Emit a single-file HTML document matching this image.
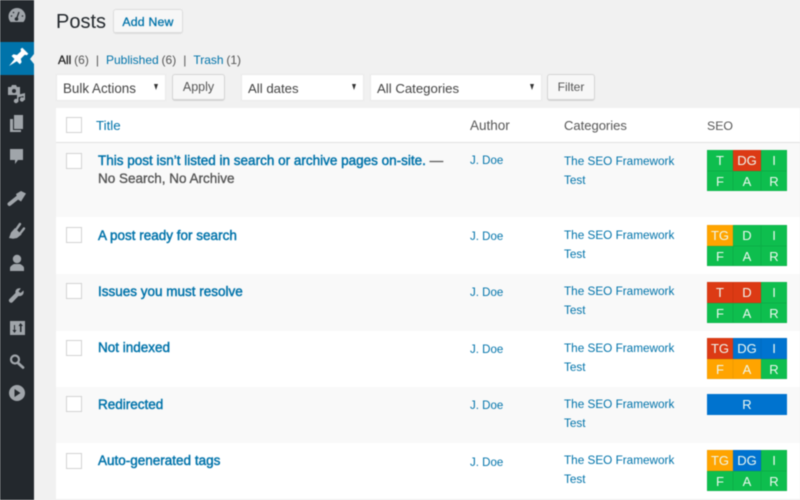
<!DOCTYPE html>
<html><head><meta charset="utf-8"><style>
*{box-sizing:border-box}
html,body{margin:0;padding:0;width:800px;height:500px;overflow:hidden;background:#f1f1f1;font-family:"Liberation Sans",sans-serif;color:#555}
.a{position:absolute;white-space:nowrap}
a,.l{color:#0073aa}
#wrap{position:absolute;left:0;top:0;width:800px;height:500px;overflow:hidden;filter:blur(.45px)}
.sel{background:#fff;border:1px solid #eaeaea;height:27px;font-size:13.2px;line-height:27px;padding-left:6px;color:#444}
.sel:after{content:"";position:absolute;right:7px;top:9px;border-left:2.5px solid transparent;border-right:2.5px solid transparent;border-top:6px solid #333}
.btn{background:#f7f7f7;border:1px solid #d4d4d4;border-bottom-width:2px;border-radius:3px;color:#555;text-align:center}
.row{position:absolute;left:56px;width:744px}
.cb{position:absolute;left:66px;width:16px;height:16px;background:#fff;border:1px solid #d2d2d2}
.t{position:absolute;left:98px;font-size:13.5px;color:#0073aa;white-space:nowrap;line-height:18px;-webkit-text-stroke:.45px #0073aa}
.au{position:absolute;left:470px;font-size:11.5px;color:#0073aa;line-height:16px}
.c{position:absolute;left:564px;font-size:11.75px;color:#0073aa;line-height:19px;white-space:nowrap}
.g{position:absolute;left:707px;width:80px;height:41px;display:grid;grid-template-columns:26px 28px 26px;grid-template-rows:21px 20px;font-size:13px;color:#eef8f0;text-align:center;line-height:21px}
.g div{background:#0ebe4e;box-shadow:inset 0 0 0 .5px #0cae47}
.g .o{background:#ffa400;box-shadow:inset 0 0 0 .5px #f09a00}.g .r{background:#dc3a14;box-shadow:inset 0 0 0 .5px #cc3511}.g .b{background:#0073cf;box-shadow:inset 0 0 0 .5px #006bc0}
svg{position:absolute;left:0;top:0}
</style></head><body><div id="wrap">
<div class="a" style="left:0;top:0;width:34px;height:500px;background:#23282d"></div>
<div class="a" style="left:0;top:42px;width:34px;height:33px;background:#0073aa"></div>
<div class="a" style="left:30px;top:54px;border-style:solid;border-width:5px 4px 5px 0;border-color:transparent #f1f1f1 transparent transparent;width:0;height:0"></div>
<svg width="34" height="500" fill="#a0a5aa">
<path d="M10.500 22A8.500 8.500 0 1 1 23.500 22z"/><path d="M16.500 19l2.500-7" stroke="#23282d" stroke-width="1.300"/><circle cx="16.500" cy="19" r="1.800" fill="#23282d"/><circle cx="11.500" cy="16" r=".8" fill="#23282d"/><circle cx="13.500" cy="12.500" r=".8" fill="#23282d"/><circle cx="22.500" cy="16" r=".8" fill="#23282d"/>
<path fill="#fff" d="M9 66l5.500-7-3-3 2-1.800 3.500.8 4-3.800-.5-2.200 1.800-1.200 6 6-1.500 1.500-2-.5-4 4 .8 3.500-1.800 2-3-3z"/>
<path d="M8 87h3l1-2h4l1 2h3v8H8z"/><circle cx="14" cy="91" r="2" fill="#23282d"/><path d="M17 101v-6l8-2v7h-1.500v-4l-5 1.200V102z"/><circle cx="16" cy="101" r="2.200"/><circle cx="22" cy="99.500" r="2.200"/>
<path d="M14 115h9v14h-9z"/><path d="M10 119h3v11h8v2H10z"/>
<path d="M10 149h13v11h-5l-3 4v-4h-5z"/>
<path d="M16 194l5-3 5 2.500-5 8-3-2z"/><path d="M17 198l-7.500 6" stroke="#a0a5aa" stroke-width="4" stroke-linecap="round"/>
<path d="M9 238l2-5.500 4-4.500 6.500 6.500-4.500 3.500-4 .8z"/><path d="M16.500 229l3.500-5M20.500 233l3.500-4.500" stroke="#a0a5aa" stroke-width="2.400" stroke-linecap="round"/>
<circle cx="17" cy="259" r="4.200"/><path d="M10 271v-3c0-2 3-3.500 4-4h6c1 .5 4 2 4 4v3z"/>
<path d="M23.500 290.500l-3 2.500-2-1.500 2.300-3c-3-1-6 1.200-5.300 4.500l-6 6a2.200 2.200 0 0 0 3 3.200l6-6.200c3.500.7 5.800-2 5-5.500z"/>
<path fill-rule="evenodd" d="M10 321h15v14H10zM14 325v5h-1.500l2 3 2-3H15v-5zM20.500 323l-2 3H20v6h1.500v-6H23z"/>
<circle cx="15" cy="359.500" r="4" fill="none" stroke="#a0a5aa" stroke-width="2.200"/><path d="M18 363l5 4.500" stroke="#a0a5aa" stroke-width="2.800" stroke-linecap="round"/>
<circle cx="17" cy="393" r="8"/><path d="M14.500 389v8l6-4z" fill="#23282d"/>
</svg>

<div class="a" style="left:56px;top:9px;font-size:20px;line-height:27px;color:#23282d">Posts</div>
<div class="a btn" style="left:113px;top:8.500px;width:70px;height:25px;color:#0073aa;font-size:12.300px;line-height:24px;border-color:#ddd;-webkit-text-stroke:.3px #0073aa;letter-spacing:.2px">Add New</div>
<div class="a" style="left:58px;top:52px;font-size:12px;line-height:16px;word-spacing:-.5px"><span style="color:#222;-webkit-text-stroke:.3px #222">All</span> (6)<span style="margin:0 7px">|</span><span class="l">Published</span> (6)<span style="margin:0 7px">|</span><span class="l">Trash</span> (1)</div>

<div class="a sel" style="left:56px;top:74px;width:110px;font-size:13.400px">Bulk Actions</div>
<div class="a btn" style="left:172px;top:74px;width:53px;height:27px;font-size:12.500px;line-height:25px">Apply</div>
<div class="a sel" style="left:241px;top:74px;width:123px;padding-left:6px">All dates</div>
<div class="a sel" style="left:370px;top:74px;width:172px">All Categories</div>
<div class="a btn" style="left:547px;top:74px;width:48px;height:27px;font-size:12px;line-height:25px">Filter</div>

<div class="row" style="top:108px;height:35px;background:#fff;border-bottom:1px solid #e1e1e1"></div>
<div class="row" style="top:143px;height:74px;background:#f9f9f9"></div>
<div class="row" style="top:217px;height:57px;background:#fff"></div>
<div class="row" style="top:274px;height:57px;background:#f9f9f9"></div>
<div class="row" style="top:331px;height:56px;background:#fff"></div>
<div class="row" style="top:387px;height:56px;background:#f9f9f9"></div>
<div class="row" style="top:443px;height:56px;background:#fff"></div>

<div class="cb" style="top:117px"></div>
<div class="a l" style="left:96px;top:118px;font-size:13.300px;line-height:16px">Title</div>
<div class="a" style="left:470px;top:118px;font-size:13.500px;line-height:16px">Author</div>
<div class="a" style="left:564px;top:118px;font-size:13px;line-height:16px">Categories</div>
<div class="a" style="left:707px;top:118px;font-size:12.300px;line-height:16px">SEO</div>

<div class="cb" style="top:152.500px"></div>
<div class="t" style="top:152px">This post isn’t listed in search or archive pages on-site. <span style="color:#555;-webkit-text-stroke:.35px #555">—</span></div>
<div class="t" style="top:170px;color:#555;-webkit-text-stroke:.35px #555;font-size:13.500px">No Search, No Archive</div>
<div class="au" style="top:153px">J. Doe</div>
<div class="c" style="top:151.500px">The SEO Framework<br>Test</div>
<div class="g" style="top:150px"><div>T</div><div class="r">DG</div><div>I</div><div>F</div><div>A</div><div>R</div></div>

<div class="cb" style="top:227px"></div>
<div class="t" style="top:227px">A post ready for search</div>
<div class="au" style="top:229px">J. Doe</div>
<div class="c" style="top:226px">The SEO Framework<br>Test</div>
<div class="g" style="top:225px"><div class="o">TG</div><div>D</div><div>I</div><div>F</div><div>A</div><div>R</div></div>

<div class="cb" style="top:283px"></div>
<div class="t" style="top:283px">Issues you must resolve</div>
<div class="au" style="top:285px">J. Doe</div>
<div class="c" style="top:282px">The SEO Framework<br>Test</div>
<div class="g" style="top:281.500px"><div class="r">T</div><div class="r">D</div><div>I</div><div>F</div><div>A</div><div>R</div></div>

<div class="cb" style="top:340px"></div>
<div class="t" style="top:339px">Not indexed</div>
<div class="au" style="top:342px">J. Doe</div>
<div class="c" style="top:339px">The SEO Framework<br>Test</div>
<div class="g" style="top:337.500px"><div class="r">TG</div><div class="b">DG</div><div class="b">I</div><div class="o">F</div><div class="o">A</div><div>R</div></div>

<div class="cb" style="top:396px"></div>
<div class="t" style="top:395.500px">Redirected</div>
<div class="au" style="top:398px">J. Doe</div>
<div class="c" style="top:395px">The SEO Framework<br>Test</div>
<div class="a" style="left:707px;top:394px;width:80px;height:20.500px;background:#0073cf;color:#eef8f0;font-size:13px;line-height:22px;text-align:center">R</div>

<div class="cb" style="top:453px"></div>
<div class="t" style="top:452px">Auto-generated tags</div>
<div class="au" style="top:455px">J. Doe</div>
<div class="c" style="top:451px">The SEO Framework<br>Test</div>
<div class="g" style="top:450px"><div class="o">TG</div><div class="b">DG</div><div>I</div><div>F</div><div>A</div><div>R</div></div>
</div></body></html>
